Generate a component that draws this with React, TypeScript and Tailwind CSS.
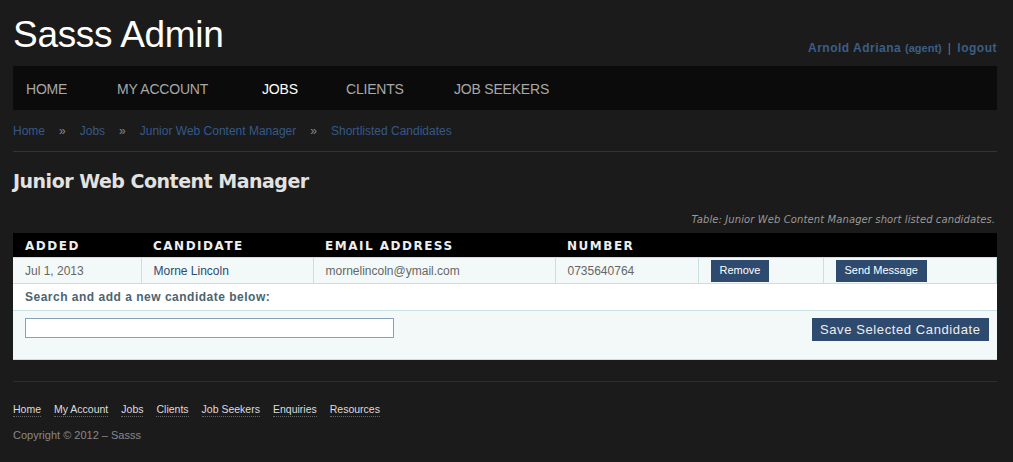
export default function App() {
  const nav = [
    { label: 'Home', w: 'ml-[13px] w-[91px]' },
    { label: 'My Account', w: 'w-[145px]' },
    { label: 'Jobs', w: 'w-[84px]' },
    { label: 'Clients', w: 'w-[108px]' },
    { label: 'Job Seekers', w: '' },
  ];
  const footer = ['Home', 'My Account', 'Jobs', 'Clients', 'Job Seekers', 'Enquiries', 'Resources'];

  return (
    <main className="min-h-screen bg-[#1b1b1b] font-['Liberation_Sans',Arial,sans-serif] text-[#ccc]">
      <div className="pl-[13px] pr-[16px] pt-[8px]">
        {/* Header */}
        <div className="flex justify-between items-end h-[58px]">
          <h1 className="text-[37px] leading-[44px] mb-[9px] text-white tracking-[-0.3px]">Sasss Admin</h1>
          <div className="flex items-baseline gap-[6px] mb-[9px] text-[12px] font-bold tracking-[0.5px] text-[#3c5e87]">
            <span>
              Arnold Adriana <span className="text-[11px] tracking-normal">(agent)</span>
            </span>
            <span className="text-[#777] font-normal">|</span>
            <span>logout</span>
          </div>
        </div>

        {/* Nav */}
        <nav className="bg-[#0b0b0b] h-[44px] pt-[3px] flex items-center">
          {nav.map((n) => (
            <a
              key={n.label}
              className={`uppercase text-[14px] tracking-[-0.2px] ${n.label === 'Jobs' ? 'text-white' : 'text-[#a8a8a8]'} ${n.w}`}
            >
              {n.label}
            </a>
          ))}
        </nav>

        {/* Breadcrumb */}
        <div className="flex items-center h-[42px] pt-[1px] text-[12px] text-[#34598a] border-b border-[#333]">
          <span>Home</span>
          <span className="text-[#888] mx-[14px]">»</span>
          <span>Jobs</span>
          <span className="text-[#888] mx-[14px]">»</span>
          <span>Junior Web Content Manager</span>
          <span className="text-[#888] mx-[14px]">»</span>
          <span>Shortlisted Candidates</span>
        </div>

        <h2 className="mt-[15px] text-[19px] font-bold font-['DejaVu_Sans',sans-serif] text-[#e2e2e2] tracking-[-0.5px]">
          Junior Web Content Manager
        </h2>

        <p className="text-right italic text-[10px] font-['DejaVu_Sans',sans-serif] text-[#999] mt-[16px] pr-[2px] tracking-[0.1px]">
          Table: Junior Web Content Manager short listed candidates.
        </p>

        {/* Table */}
        <table className="w-full mt-[6px] border-collapse text-[12px]">
          <thead>
            <tr className="bg-black h-[25px] text-left text-[12px] font-['DejaVu_Sans',sans-serif] tracking-[1.5px] text-[#eee]">
              <th className="pl-[12px] pt-[2px] w-[128px] font-bold">ADDED</th>
              <th className="pl-[12px] pt-[2px] w-[172px] font-bold">CANDIDATE</th>
              <th className="pl-[12px] pt-[2px] w-[242px] font-bold">EMAIL ADDRESS</th>
              <th className="pl-[12px] pt-[2px] w-[143px] font-bold">NUMBER</th>
              <th className="w-[125px]"></th>
              <th></th>
            </tr>
          </thead>
          <tbody>
            <tr className="bg-[#f3f9f9] h-[26px] text-[#666]">
              <td className="pl-[12px] border border-[#c8e0e0] border-l-0">Jul 1, 2013</td>
              <td className="pl-[12px] border border-[#c8e0e0] text-[#2b4a72]">Morne Lincoln</td>
              <td className="pl-[12px] border border-[#c8e0e0]">mornelincoln@ymail.com</td>
              <td className="pl-[12px] border border-[#c8e0e0]">0735640764</td>
              <td className="pl-[12px] border border-[#c8e0e0]">
                <button className="bg-[#2e4a6e] text-white text-[11px] px-[9px] h-[22px] align-middle">Remove</button>
              </td>
              <td className="pl-[12px] border border-[#c8e0e0]">
                <button className="bg-[#2e4a6e] text-white text-[11px] px-[9px] h-[22px] align-middle">Send Message</button>
              </td>
            </tr>
            <tr className="bg-white h-[27px]">
              <td colSpan={6} className="pl-[12px] font-bold text-[#4b6471] tracking-[0.5px] border-b border-[#c8e0e0]">
                Search and add a new candidate below:
              </td>
            </tr>
            <tr className="bg-[#f3f9f9] h-[49px]">
              <td colSpan={6} className="align-top pl-[12px] pr-[8px] pt-[7px] border-b border-[#c8e0e0]">
                <div className="flex justify-between">
                  <input className="w-[369px] h-[20px] bg-white border border-[#8aa0b8]" />
                  <button className="bg-[#2e4a6e] text-[#eee] text-[13px] tracking-[0.6px] px-[8px] h-[23px]">
                    Save Selected Candidate
                  </button>
                </div>
              </td>
            </tr>
          </tbody>
        </table>

        {/* Footer */}
        <div className="border-t border-[#2e2e2e] mt-[21px] pt-[21px]">
          <div className="flex gap-[13px] text-[10.5px] text-[#ddd]">
            {footer.map((f) => (
              <a key={f} className="border-b border-dotted border-[#666] leading-[13px]">
                {f}
              </a>
            ))}
          </div>
          <p className="text-[11px] text-[#888] mt-[10px]">Copyright © 2012 – Sasss</p>
        </div>
      </div>
    </main>
  );
}
